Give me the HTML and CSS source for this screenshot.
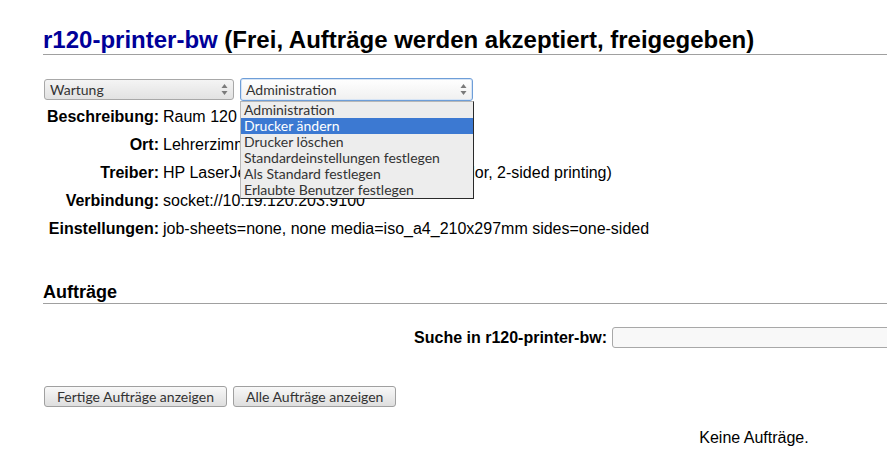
FILE: index.html
```html
<!DOCTYPE html>
<html lang="de">
<head>
<meta charset="utf-8">
<title>r120-printer-bw</title>
<link rel="stylesheet" href="styles.css">
</head>
<body>
<div class="page">
  <h1 class="title"><span class="pname">r120-printer-bw</span> (Frei, Aufträge werden akzeptiert, freigegeben)</h1>

  <div class="controls">
    <div class="select select-gray">
      <span class="select-text">Wartung</span>
      <svg class="arrows" width="7" height="13" viewBox="0 0 7 13"><path d="M3.5 1 L6.5 5 L0.5 5 Z M3.5 12 L6.5 8 L0.5 8 Z" fill="#7a7a7a"/></svg>
    </div>
    <div class="select-wrap">
      <div class="select select-focus">
        <span class="select-text">Administration</span>
        <svg class="arrows" width="7" height="13" viewBox="0 0 7 13"><path d="M3.5 1 L6.5 5 L0.5 5 Z M3.5 12 L6.5 8 L0.5 8 Z" fill="#7a7a7a"/></svg>
      </div>
      <ul class="dropdown">
        <li>Administration</li>
        <li class="active">Drucker ändern</li>
        <li>Drucker löschen</li>
        <li>Standardeinstellungen festlegen</li>
        <li>Als Standard festlegen</li>
        <li>Erlaubte Benutzer festlegen</li>
      </ul>
    </div>
  </div>

  <dl class="info">
    <div class="row"><dt>Beschreibung:</dt><dd>Raum 120 Lehrerzimmer s/w</dd></div>
    <div class="row"><dt>Ort:</dt><dd>Lehrerzimmer</dd></div>
    <div class="row"><dt>Treiber:</dt><dd>HP LaserJet Pro M601 M602 Series PS (color, 2-sided printing)</dd></div>
    <div class="row"><dt>Verbindung:</dt><dd>socket://10.19.120.203:9100</dd></div>
    <div class="row"><dt>Einstellungen:</dt><dd>job-sheets=none, none media=iso_a4_210x297mm sides=one-sided</dd></div>
  </dl>

  <h2 class="section">Aufträge</h2>

  <div class="search">
    <label class="search-label">Suche in r120-printer-bw:</label>
    <div class="search-input"></div>
  </div>

  <div class="buttons">
    <div class="btn">Fertige Aufträge anzeigen</div>
    <div class="btn">Alle Aufträge anzeigen</div>
  </div>

  <p class="empty">Keine Aufträge.</p>
</div>
</body>
</html>
```

FILE: styles.css
```css
html, body {
  margin: 0;
  padding: 0;
  background: #ffffff;
  overflow: hidden;
}

body {
  font-family: "Liberation Sans", Arial, sans-serif;
  font-size: 16px;
  color: #000;
}

.page {
  padding-left: 43px;
  width: 1422px;
}

.title {
  margin: 26px 0 0 0;
  font-size: 24px;
  line-height: 28px;
  font-weight: bold;
  border-bottom: 1px solid #a0a0a0;
}

.pname {
  color: #000099;
}

.controls {
  display: flex;
  align-items: flex-start;
  gap: 6px;
  margin: 23px 0 0 1px;
  height: 23px;
  font-family: Lato, "Open Sans", sans-serif;
  font-size: 14px;
}

.select {
  box-sizing: border-box;
  display: flex;
  align-items: center;
  justify-content: space-between;
  border-radius: 3px;
  color: #333;
}

.select-gray {
  width: 190px;
  height: 21px;
  margin-top: 1px;
  padding: 0 5px 0 5px;
  border: 1px solid #a8a8a8;
  background: linear-gradient(#f4f4f4, #e2e2e2);
}

.select-wrap {
  position: relative;
}

.select-focus {
  width: 233px;
  height: 23px;
  padding: 0 5px 0 5px;
  border: 1px solid #6e9ed8;
  background: linear-gradient(#ffffff, #f0f0f0);
  box-shadow: inset 0 0 0 1px #d6e4f5;
}

.select-text {
  line-height: 19px;
}

.arrows {
  display: block;
}

.dropdown {
  position: absolute;
  left: 0;
  top: 23px;
  width: 232px;
  margin: 0;
  padding: 0;
  list-style: none;
  background: #ededed;
  border: 1px solid #b8b8b8;
  border-right-color: #2a2a2a;
  border-bottom-color: #2a2a2a;
  z-index: 10;
}

.dropdown li {
  height: 16px;
  line-height: 16px;
  padding-left: 3px;
  color: #333;
  white-space: nowrap;
}

.dropdown li.active {
  background: #3c79d2;
  color: #ffffff;
}

.info {
  margin: 2px 0 0 0;
  padding: 0;
}

.row {
  display: flex;
  height: 28px;
  line-height: 28px;
}

.row dt {
  width: 116px;
  text-align: right;
  font-weight: bold;
  flex: none;
}

.row dd {
  margin: 0 0 0 4px;
  white-space: nowrap;
}

.section {
  margin: 38px 0 0 0;
  font-size: 18px;
  line-height: 22px;
  font-weight: bold;
  border-bottom: 1px solid #a0a0a0;
}

.search {
  display: flex;
  justify-content: center;
  align-items: center;
  gap: 5px;
  margin-top: 23px;
  height: 21px;
}

.search-label {
  font-weight: bold;
  white-space: nowrap;
}

.search-input {
  box-sizing: border-box;
  width: 482px;
  height: 21px;
  border: 1px solid #a8a8a8;
  border-radius: 3px;
  background: #f8f8f8;
}

.buttons {
  display: flex;
  gap: 6px;
  margin: 38px 0 0 1px;
  font-family: Lato, "Open Sans", sans-serif;
  font-size: 14px;
}

.btn {
  box-sizing: border-box;
  height: 21px;
  line-height: 19px;
  padding: 0 12px;
  border: 1px solid #a0a0a0;
  border-radius: 3px;
  background: linear-gradient(#f8f8f8, #dedede);
  color: #333;
  white-space: nowrap;
}

.empty {
  margin: 22px 0 0 0;
  line-height: 18px;
  text-align: center;
}
```
